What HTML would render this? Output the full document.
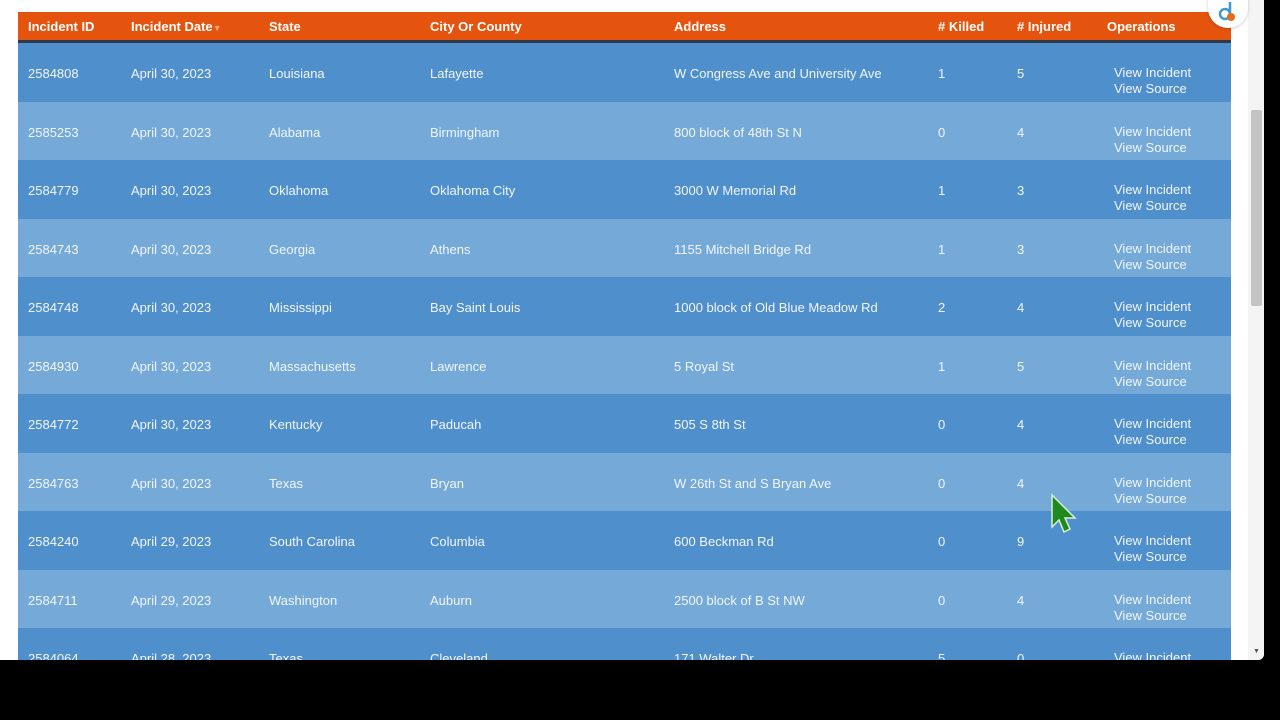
<!DOCTYPE html>
<html><head><meta charset="utf-8"><style>
*{margin:0;padding:0;box-sizing:border-box}
body{width:1280px;height:720px;background:#000;position:relative;overflow:hidden;font-family:"Liberation Sans",sans-serif}
#page{position:absolute;left:0;top:0;width:1264px;height:660px;background:#fff;overflow:hidden;border-radius:0 0 6px 0}
#sb{position:absolute;left:1248px;top:0;width:16px;height:660px;background:#f4f4f4}
#thumb{position:absolute;left:1251px;top:110px;width:11px;height:196px;background:#c4c4c4;border-radius:2px}
#hdr{position:absolute;left:18px;top:12px;width:1213px;height:28px;background:#e5540f;border-bottom:0}
#hline{position:absolute;left:18px;top:40px;width:1213px;height:3px;background:#2d3a4a}
.h{position:absolute;top:19px;color:#fff;font-weight:bold;font-size:13px;letter-spacing:0px}
.r{position:absolute;left:18px;width:1213px;height:59px;color:#f2f6fb;font-size:13px;letter-spacing:0}
.r span{position:absolute;top:23px}
.r .o{line-height:15.5px;top:22px}
.a{background:#4f8fcc}.b{background:#74a9d8}
</style></head><body>
<div id="page">
<div id="hdr"></div><div id="hline"></div>
<div class="h" style="left:28px">Incident ID</div>
<div class="h" style="left:131px">Incident Date<span style="color:#f5a27a;font-size:9px">▼</span></div>
<div class="h" style="left:269px">State</div>
<div class="h" style="left:430px">City Or County</div>
<div class="h" style="left:674px">Address</div>
<div class="h" style="left:938px"># Killed</div>
<div class="h" style="left:1017px"># Injured</div>
<div class="h" style="left:1107px">Operations</div>

<div class="r a" style="top:43px"><span style="left:10px">2584808</span><span style="left:113px">April 30, 2023</span><span style="left:251px">Louisiana</span><span style="left:412px">Lafayette</span><span style="left:656px">W Congress Ave and University Ave</span><span style="left:920px">1</span><span style="left:999px">5</span><span class="o" style="left:1096px">View Incident<br>View Source</span></div>
<div class="r b" style="top:102px"><span style="left:10px">2585253</span><span style="left:113px">April 30, 2023</span><span style="left:251px">Alabama</span><span style="left:412px">Birmingham</span><span style="left:656px">800 block of 48th St N</span><span style="left:920px">0</span><span style="left:999px">4</span><span class="o" style="left:1096px">View Incident<br>View Source</span></div>
<div class="r a" style="top:160px"><span style="left:10px">2584779</span><span style="left:113px">April 30, 2023</span><span style="left:251px">Oklahoma</span><span style="left:412px">Oklahoma City</span><span style="left:656px">3000 W Memorial Rd</span><span style="left:920px">1</span><span style="left:999px">3</span><span class="o" style="left:1096px">View Incident<br>View Source</span></div>
<div class="r b" style="top:219px"><span style="left:10px">2584743</span><span style="left:113px">April 30, 2023</span><span style="left:251px">Georgia</span><span style="left:412px">Athens</span><span style="left:656px">1155 Mitchell Bridge Rd</span><span style="left:920px">1</span><span style="left:999px">3</span><span class="o" style="left:1096px">View Incident<br>View Source</span></div>
<div class="r a" style="top:277px"><span style="left:10px">2584748</span><span style="left:113px">April 30, 2023</span><span style="left:251px">Mississippi</span><span style="left:412px">Bay Saint Louis</span><span style="left:656px">1000 block of Old Blue Meadow Rd</span><span style="left:920px">2</span><span style="left:999px">4</span><span class="o" style="left:1096px">View Incident<br>View Source</span></div>
<div class="r b" style="top:336px"><span style="left:10px">2584930</span><span style="left:113px">April 30, 2023</span><span style="left:251px">Massachusetts</span><span style="left:412px">Lawrence</span><span style="left:656px">5 Royal St</span><span style="left:920px">1</span><span style="left:999px">5</span><span class="o" style="left:1096px">View Incident<br>View Source</span></div>
<div class="r a" style="top:394px"><span style="left:10px">2584772</span><span style="left:113px">April 30, 2023</span><span style="left:251px">Kentucky</span><span style="left:412px">Paducah</span><span style="left:656px">505 S 8th St</span><span style="left:920px">0</span><span style="left:999px">4</span><span class="o" style="left:1096px">View Incident<br>View Source</span></div>
<div class="r b" style="top:453px"><span style="left:10px">2584763</span><span style="left:113px">April 30, 2023</span><span style="left:251px">Texas</span><span style="left:412px">Bryan</span><span style="left:656px">W 26th St and S Bryan Ave</span><span style="left:920px">0</span><span style="left:999px">4</span><span class="o" style="left:1096px">View Incident<br>View Source</span></div>
<div class="r a" style="top:511px"><span style="left:10px">2584240</span><span style="left:113px">April 29, 2023</span><span style="left:251px">South Carolina</span><span style="left:412px">Columbia</span><span style="left:656px">600 Beckman Rd</span><span style="left:920px">0</span><span style="left:999px">9</span><span class="o" style="left:1096px">View Incident<br>View Source</span></div>
<div class="r b" style="top:570px"><span style="left:10px">2584711</span><span style="left:113px">April 29, 2023</span><span style="left:251px">Washington</span><span style="left:412px">Auburn</span><span style="left:656px">2500 block of B St NW</span><span style="left:920px">0</span><span style="left:999px">4</span><span class="o" style="left:1096px">View Incident<br>View Source</span></div>
<div class="r a" style="top:628px"><span style="left:10px">2584064</span><span style="left:113px">April 28, 2023</span><span style="left:251px">Texas</span><span style="left:412px">Cleveland</span><span style="left:656px">171 Walter Dr</span><span style="left:920px">5</span><span style="left:999px">0</span><span class="o" style="left:1096px">View Incident<br>View Source</span></div>

<div id="sb"></div><div id="thumb"></div>
<div style="position:absolute;left:1253px;top:648px;color:#555;font-size:7px">▼</div>
<div style="position:absolute;left:1208px;top:-14px;width:40px;height:42px;background:#fff;border-radius:0 0 20px 20px;box-shadow:0 1px 3px rgba(0,0,0,.2)"></div>
<svg style="position:absolute;left:1216px;top:0" width="24" height="24" viewBox="0 0 24 24"><circle cx="9" cy="14" r="5" fill="none" stroke="#3a9ad0" stroke-width="2.5"/><path d="M14 2V17" stroke="#3a9ad0" stroke-width="2.5"/><circle cx="15" cy="17" r="4" fill="#e86a1a"/></svg>
<svg style="position:absolute;left:1050px;top:493px" width="30" height="42" viewBox="0 0 30 42"><path d="M2 2L2 34L9 27L14 39L20 36L15 25L25 25Z" fill="#1e8a1e" stroke="#d8f0d8" stroke-width="1.5"/></svg>
</div>
</body></html>
